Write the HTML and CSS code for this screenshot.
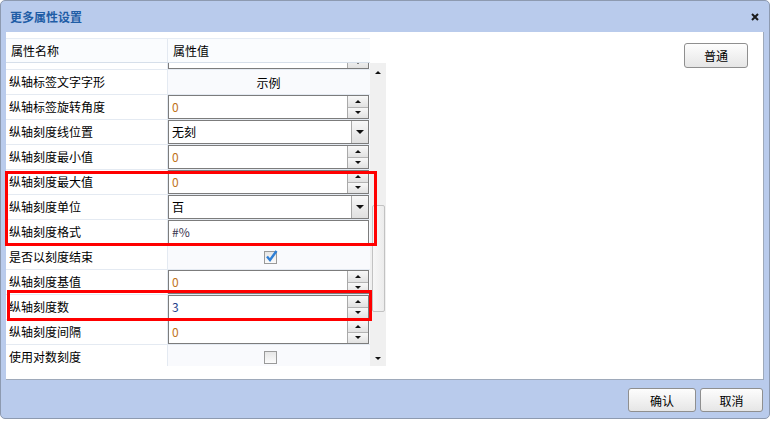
FILE: index.html
```html
<!DOCTYPE html>
<html lang="zh-CN">
<head>
    <meta charset="UTF-8">
    <meta name="viewport" content="width=device-width, initial-scale=1.0">
    <title>更多属性设置</title>
    <link rel="stylesheet" href="styles.css">
</head>
<body>
    <div class="window">
        <div class="title-bar">
            <span class="title">更多属性设置</span>
            <span class="close">
                <svg width="8" height="8" viewBox="0 0 8 8"><path d="M1 1L7 7M7 1L1 7" stroke="#1b1b1b" stroke-width="2"/></svg>
            </span>
        </div>

        <div class="panel">
            <div class="grid">
                <div class="grid-head">
                    <div class="head-name">属性名称</div>
                    <div class="head-value">属性值</div>
                </div>

                <div class="grid-body">
                    <div class="rows">
                        <div class="rows-inner">
                            <div class="row">
                                <div class="name"></div>
                                <div class="value">
                                    <div class="field"><span class="text"></span><span class="spin"><i class="up"></i><i class="down"></i></span></div>
                                </div>
                            </div>
                            <div class="row">
                                <div class="name">纵轴标签文字字形</div>
                                <div class="value">示例</div>
                            </div>
                            <div class="row">
                                <div class="name">纵轴标签旋转角度</div>
                                <div class="value">
                                    <div class="field"><span class="text num">0</span><span class="spin"><i class="up"></i><i class="down"></i></span></div>
                                </div>
                            </div>
                            <div class="row">
                                <div class="name">纵轴刻度线位置</div>
                                <div class="value">
                                    <div class="field"><span class="text">无刻</span><span class="drop"><i class="down big"></i></span></div>
                                </div>
                            </div>
                            <div class="row">
                                <div class="name">纵轴刻度最小值</div>
                                <div class="value">
                                    <div class="field"><span class="text num">0</span><span class="spin"><i class="up"></i><i class="down"></i></span></div>
                                </div>
                            </div>
                            <div class="row">
                                <div class="name">纵轴刻度最大值</div>
                                <div class="value">
                                    <div class="field"><span class="text num">0</span><span class="spin"><i class="up"></i><i class="down"></i></span></div>
                                </div>
                            </div>
                            <div class="row">
                                <div class="name">纵轴刻度单位</div>
                                <div class="value">
                                    <div class="field"><span class="text">百</span><span class="drop"><i class="down big"></i></span></div>
                                </div>
                            </div>
                            <div class="row">
                                <div class="name">纵轴刻度格式</div>
                                <div class="value">
                                    <div class="field"><span class="text fmt">#%</span></div>
                                </div>
                            </div>
                            <div class="row">
                                <div class="name">是否以刻度结束</div>
                                <div class="value">
                                    <span class="check">
                                        <svg width="14" height="15" viewBox="0 0 14 15"><path d="M3 7.5L6 11L12.5 2" fill="none" stroke="#2f7fd6" stroke-width="2.4"/></svg>
                                    </span>
                                </div>
                            </div>
                            <div class="row">
                                <div class="name">纵轴刻度基值</div>
                                <div class="value">
                                    <div class="field"><span class="text num">0</span><span class="spin"><i class="up"></i><i class="down"></i></span></div>
                                </div>
                            </div>
                            <div class="row">
                                <div class="name">纵轴刻度数</div>
                                <div class="value">
                                    <div class="field"><span class="text num-blue">3</span><span class="spin"><i class="up"></i><i class="down"></i></span></div>
                                </div>
                            </div>
                            <div class="row">
                                <div class="name">纵轴刻度间隔</div>
                                <div class="value">
                                    <div class="field"><span class="text num">0</span><span class="spin"><i class="up"></i><i class="down"></i></span></div>
                                </div>
                            </div>
                            <div class="row">
                                <div class="name">使用对数刻度</div>
                                <div class="value">
                                    <span class="check"></span>
                                </div>
                            </div>
                        </div>
                    </div>

                    <div class="vscroll">
                        <div class="arrow"><i class="up"></i></div>
                        <div class="track"><div class="thumb"></div></div>
                        <div class="arrow"><i class="down"></i></div>
                    </div>
                </div>

                <!-- 标记框 -->
                <div class="mark mark-a"></div>
                <div class="mark mark-b"></div>
            </div>

            <div class="side">
                <button class="btn btn-normal">普通</button>
            </div>
        </div>

        <div class="footer">
            <button class="btn btn-ok">确认</button>
            <button class="btn btn-cancel">取消</button>
        </div>
    </div>
</body>
</html>
```

FILE: styles.css
```css
* {
    margin: 0;
    padding: 0;
    box-sizing: border-box;
}

body {
    background-color: #fff;
    font-family: "Noto Sans CJK SC", "Microsoft YaHei", sans-serif;
    font-size: 12px;
    color: #000;
}

.window {
    width: 770px;
    height: 419px;
    background-color: #b9cbec;
    border: 1px solid #8d9ab0;
    border-radius: 5px;
    display: flex;
    flex-direction: column;
}

.title-bar {
    height: 31px;
    display: flex;
    align-items: center;
    justify-content: space-between;
    padding: 0 10px 0 9px;
}

.title {
    font-weight: bold;
    color: #1f5da6;
}

.close {
    display: flex;
}

.panel {
    margin: 0 5px;
    height: 348px;
    background-color: #fff;
    border-right: 1px solid #9ea9ba;
    border-bottom: 1px solid #9ea9ba;
    display: flex;
}

/* 属性表格 */
.grid {
    position: relative;
    width: 380px;
    margin-top: 6px;
}

.grid-head {
    width: 364px;
    height: 25px;
    display: flex;
    background-color: #fafcfe;
    border-top: 1px solid #e6ecf4;
    border-bottom: 1px solid #d6dfea;
    line-height: 23px;
}

.head-name {
    width: 162px;
    padding-left: 5px;
    border-right: 1px solid #e3e9f1;
}

.head-value {
    flex: 1;
    padding-left: 5px;
}

.grid-body {
    height: 303px;
    display: flex;
}

.rows {
    width: 364px;
    overflow: hidden;
}

.rows-inner {
    margin-top: -18px;
}

.row {
    height: 25px;
    display: flex;
    border-bottom: 1px solid #e4eaf2;
}

.row .name {
    width: 162px;
    padding-left: 3px;
    line-height: 24px;
    border-right: 1px solid #e4eaf2;
    white-space: nowrap;
}

.row .value {
    flex: 1;
    padding-right: 1px;
    background-color: #f9fafd;
    display: flex;
    align-items: center;
    justify-content: center;
}

.field {
    width: 100%;
    height: 24px;
    display: flex;
    background-color: #fff;
    border: 1px solid #7c7c7c;
}

.field .text {
    flex: 1;
    padding-left: 3px;
    line-height: 22px;
}

.num {
    color: #c0721c;
}

.num-blue {
    color: #23418a;
}

.fmt {
    color: #3a3550;
}

.spin {
    width: 21px;
    display: flex;
    flex-direction: column;
    border-left: 1px solid #a9a9a9;
}

i,
.drop,
.vscroll .arrow {
    display: flex;
    align-items: center;
    justify-content: center;
}

.spin i {
    flex: 1;
    background: linear-gradient(#f8f8f8, #e2e2e2);
}

.spin i + i {
    border-top: 1px solid #b3b3b3;
}

.drop {
    width: 17px;
    border-left: 1px solid #a9a9a9;
    background: linear-gradient(#f8f8f8, #e0e0e0);
}

/* 小三角 */
.up::after,
.down::after {
    content: "";
    display: block;
    border-left: 3px solid transparent;
    border-right: 3px solid transparent;
}

.up::after {
    border-bottom: 3px solid #111;
}

.down::after {
    border-top: 3px solid #111;
}

.down.big::after {
    border-left-width: 4px;
    border-right-width: 4px;
    border-top-width: 4px;
}

.check {
    width: 13px;
    height: 13px;
    margin-left: 4px;
    border: 1px solid #9a9a9a;
    background: linear-gradient(#e6e6e6, #fbfbfb);
    position: relative;
}

.check svg {
    position: absolute;
    left: -1px;
    top: -3px;
}

/* 滚动条 */
.vscroll {
    width: 16px;
    display: flex;
    flex-direction: column;
    background-color: #f0f0f0;
}

.vscroll .arrow {
    height: 17px;
    padding-top: 2px;
}

.track {
    flex: 1;
    padding: 125px 1px 0 2px;
}

.thumb {
    height: 107px;
    border: 1px solid #c2c2c2;
    border-radius: 2px;
    background: linear-gradient(to right, #f7f7f7, #ececec);
}

.mark {
    position: absolute;
    border: 3px solid #ff0000;
}

.mark-a {
    left: -1px;
    top: 133px;
    width: 372px;
    height: 75px;
}

.mark-b {
    left: 1px;
    top: 252px;
    width: 365px;
    height: 31px;
}

.side {
    flex: 1;
    display: flex;
    justify-content: flex-end;
    align-items: flex-start;
    padding: 11px 15px 0 0;
}

.btn {
    height: 24px;
    font-family: inherit;
    font-size: 12px;
    color: #000;
    border: 1px solid #8f8f8f;
    border-radius: 3px;
    background: linear-gradient(#fdfdfd, #e6e6e6);
}

.btn-normal {
    width: 64px;
    height: 25px;
}

.footer {
    flex: 1;
    display: flex;
    justify-content: flex-end;
    align-items: flex-start;
    gap: 4px;
    padding: 8px 6px 0 0;
}

.btn-ok {
    width: 68px;
}

.btn-cancel {
    width: 63px;
}
```
